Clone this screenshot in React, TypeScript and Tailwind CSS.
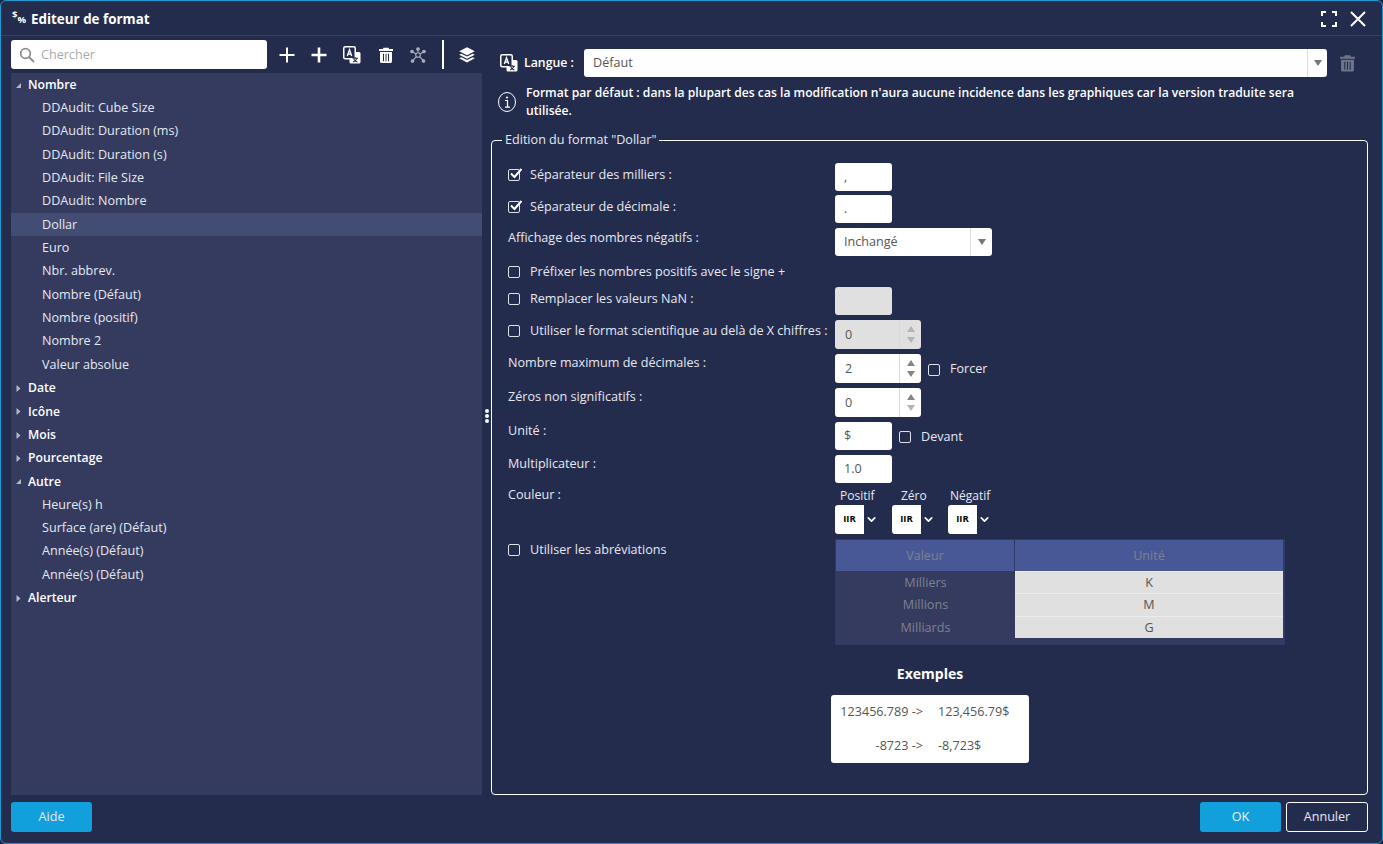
import React from "react";
import { ChevronDown } from "lucide-react";

const nombre = [
  "DDAudit: Cube Size",
  "DDAudit: Duration (ms)",
  "DDAudit: Duration (s)",
  "DDAudit: File Size",
  "DDAudit: Nombre",
  "Dollar",
  "Euro",
  "Nbr. abbrev.",
  "Nombre (Défaut)",
  "Nombre (positif)",
  "Nombre 2",
  "Valeur absolue",
];
const autre = ["Heure(s) h", "Surface (are) (Défaut)", "Année(s) (Défaut)", "Année(s) (Défaut)"];

const PlusIcon = ({ thick }: { thick?: boolean }) => (
  <svg width="16" height="16" viewBox="0 0 16 16" fill="none" stroke="#fff" strokeWidth={thick ? 2.6 : 2}>
    <path d="M8 .5v15M.5 8h15" />
  </svg>
);

const TrashIcon = ({ color = "#fff", w = 14, h = 16 }: { color?: string; w?: number; h?: number }) => (
  <svg width={w} height={h} viewBox="1 0 14 16" fill={color}>
    <path d="M5.500 .8h5l.6 1.300H15v1.900H1V2.100h3.900z" />
    <path fillRule="evenodd" d="M2 5h12v9.500c0 .9-.7 1.500-1.500 1.500h-9c-.8 0-1.500-.6-1.500-1.500zM5 6.800v7.500h1V6.800zm2.500 0v7.500h1V6.800zm2.500 0v7.500h1V6.800z" />
  </svg>
);

const TranslateIcon = ({ size = 18 }: { size?: number }) => (
  <svg width={size} height={size} viewBox="0 0 18 18" fill="none">
    <rect x="6.500" y="6" width="11" height="11.500" rx="1.500" fill="#fff" />
    <rect x=".75" y=".75" width="11.500" height="12" rx="1.500" fill="#242c4e" stroke="#fff" strokeWidth="1.500" />
    <path d="M4.300 10 6.500 3.800 8.700 10M5 8h3" stroke="#fff" strokeWidth="1.300" />
    <path d="M9.500 12.200h5.500M12 11v1.200M14 12.400c-.8 1.900-2.200 3-3.900 3.600M10.800 13.200c.8 1.300 2 2.300 3.600 2.800" stroke="#242c4e" strokeWidth="1.100" />
  </svg>
);

const NetworkIcon = () => (
  <svg width="16" height="16" viewBox="0 0 16 16" fill="none" stroke="#a9adbd" strokeWidth="1.100">
    <path d="M8 3v2.600M3 5l3 2M13 5l-3 2M3.200 13l3-3.200M12.800 13l-3-3.200" />
    <circle cx="8" cy="8" r="2.300" />
    <circle cx="8" cy="2" r="1.300" fill="#a9adbd" />
    <circle cx="2" cy="4.500" r="1.300" fill="#a9adbd" />
    <circle cx="14" cy="4.500" r="1.300" fill="#a9adbd" />
    <circle cx="2.500" cy="14" r="1.300" fill="#a9adbd" />
    <circle cx="13.500" cy="14" r="1.300" fill="#a9adbd" />
  </svg>
);

const LayersIcon = () => (
  <svg width="16" height="16" viewBox="0 0 16 16" fill="#fff">
    <path d="M8 .3 15.800 4.300 8 8.300.2 4.300z" />
    <path d="M2.300 6.700 8 9.600l5.700-2.900 2.100 1.100L8 11.800.2 7.800z" />
    <path d="M2.300 10.200 8 13.100l5.700-2.900 2.100 1.100L8 15.400.2 11.300z" />
  </svg>
);

const Arrow = ({ open }: { open?: boolean }) =>
  open ? (
    <svg width="5" height="5" viewBox="0 0 5 5" className="ml-[5px] mr-[7px]" fill="#b4b8c6">
      <path d="M5 0v5H0z" />
    </svg>
  ) : (
    <svg width="5" height="7" viewBox="0 0 5 7" className="ml-[5px] mr-[7px]" fill="#b4b8c6">
      <path d="M.5 0 4.500 3.500.5 7z" />
    </svg>
  );

const Group = ({ label, open }: { label: string; open?: boolean }) => (
  <div className="flex h-[23.33px] items-center pt-[1px] text-[12.200px] font-semibold text-white">
    <Arrow open={open} />
    {label}
  </div>
);

const Item = ({ label, active }: { label: string; active?: boolean }) => (
  <div className={`flex h-[23.33px] items-center pl-[31px] pt-[1px] text-[#e6e8f0] ${active ? "bg-[#434c73]" : ""}`}>{label}</div>
);

const Check = ({ checked }: { checked?: boolean }) => (
  <span className="relative mr-[10px] block h-[12px] w-[12px] shrink-0 rounded-[2px] border-[1.500px] border-[#dfe1e8]">
    {checked && (
      <svg width="14" height="12" viewBox="0 0 14 12" className="absolute left-[0px] top-[-2px]" fill="none" stroke="#fff" strokeWidth="2">
        <path d="M2 5.500 5.500 9l7-8" />
      </svg>
    )}
  </span>
);

const Field = ({ value, disabled }: { value?: string; disabled?: boolean }) => (
  <div className={`flex h-[28px] w-[57px] items-center rounded-[3px] px-[9px] text-[#555] ${disabled ? "bg-[#e0e0e0]" : "bg-white"}`}>
    {value}
  </div>
);

const Spinner = ({ value, disabled, faintDown }: { value: string; disabled?: boolean; faintDown?: boolean }) => (
  <div className={`flex h-[29px] w-[86px] items-center rounded-[3px] pl-[10px] text-[#555] ${disabled ? "bg-[#e0e0e0]" : "bg-white"}`}>
    <span className="flex-1 pt-[1px]">{value}</span>
    <div className="flex h-full w-[22px] flex-col items-center justify-center gap-[5px] border-l border-[#d9d9d9]">
      <svg width="8" height="6" viewBox="0 0 8 6" fill={disabled ? "#b4b4b4" : "#858585"}>
        <path d="M4 0l4 6H0z" />
      </svg>
      <svg width="8" height="6" viewBox="0 0 8 6" fill={disabled || faintDown ? "#b4b4b4" : "#858585"}>
        <path d="M4 6l4-6H0z" />
      </svg>
    </div>
  </div>
);

const Caret = () => (
  <svg width="8" height="6" viewBox="0 0 8 6" fill="#777">
    <path d="M4 6l4-6H0z" />
  </svg>
);

const Swatch = () => (
  <div className="flex items-center">
    <div className="flex h-[29px] w-[29px] items-center justify-center rounded-l-[3px] bg-white text-[9.500px] font-bold text-black">IIR</div>
    <ChevronDown size={13} strokeWidth={3.200} className="ml-[1px] text-white" />
  </div>
);

// label column is fixed so that every control starts at the same x
const Row = ({ label, check, checked, top, children, className }: { label: string; check?: boolean; checked?: boolean; top?: string; children?: React.ReactNode; className?: string }) => (
  <div className={`flex items-start ${className ?? ""}`}>
    <div className={`flex w-[327px] shrink-0 items-center whitespace-nowrap text-[#e6e8f0] ${top ?? "pt-[2px]"}`}>
      {check && <Check checked={checked} />}
      {label}
    </div>
    {children}
  </div>
);

const AbbrevRow = ({ name, unit, className }: { name: string; unit: string; className: string }) => (
  <div className={`flex items-center text-center ${className}`}>
    <span className="w-[179px] pt-[2px]">{name}</span>
    <span className="mr-[1px] flex h-full flex-1 items-center justify-center border-t border-[#ebebeb] bg-[#e0e0e0] pt-[1px] text-[#555]">{unit}</span>
  </div>
);

export default function App() {
  return (
    <div className="h-screen w-full overflow-hidden bg-[#1a2140] font-['Open_Sans',sans-serif] text-[12.600px] text-white">
      <div className="flex h-full flex-col rounded-[6px] border border-[#1b9ad2] bg-[#242c4e]">
        {/* Title */}
        <div className="flex h-[35px] shrink-0 items-center border-b border-[#353e66] pl-[11px] pr-[16px] pt-[2px]">
          <span className="mr-[3px] flex h-[20px] w-[16px] items-start text-[9.500px] font-bold leading-none">
            <span className="mt-[1px]">$</span>
            <span className="mt-[6px] text-[9.500px] tracking-[-0.5px]">%</span>
          </span>
          <span className="flex-1 text-[13.400px] font-bold">Editeur de format</span>
          <svg width="16" height="16" viewBox="0 0 16 16" fill="none" stroke="#fff" strokeWidth="2" className="mr-[13px]">
            <path d="M1 5V1h4M11 1h4v4M15 11v4h-4M5 15H1v-4" />
          </svg>
          <svg width="16" height="16" viewBox="0 0 16 16" fill="none" stroke="#fff" strokeWidth="2">
            <path d="M1 1l14 14M15 1 1 15" />
          </svg>
        </div>

        <div className="flex min-h-0 flex-1">
          {/* Left panel */}
          <div className="ml-[10px] flex w-[471px] shrink-0 flex-col pt-[4px]">
            <div className="flex h-[29px] shrink-0 items-center">
              <div className="flex h-full w-[256px] items-center rounded-[3px] bg-white pl-[8px] pt-[1px] text-[#aaa]">
                <svg width="16" height="16" viewBox="0 0 16 16" fill="none" stroke="#8d8d8d" strokeWidth="1.800" className="mr-[6px]">
                  <circle cx="6.500" cy="6.500" r="4.800" />
                  <path d="M10 10l5 5" />
                </svg>
                Chercher
              </div>
              <div className="ml-[12px] flex items-center">
                <PlusIcon />
                <span className="ml-[16px]"><PlusIcon thick /></span>
                <span className="ml-[16px]"><TranslateIcon /></span>
                <span className="ml-[18px]"><TrashIcon /></span>
                <span className="ml-[17px]"><NetworkIcon /></span>
                <span className="ml-[16px] h-[29px] w-[2px] bg-white" />
                <span className="ml-[15px]"><LayersIcon /></span>
              </div>
            </div>
            <div className="mt-[4px] min-h-0 flex-1 bg-[#343b5f]">
              <Group label="Nombre" open />
              {nombre.map((n) => (
                <Item key={n} label={n} active={n === "Dollar"} />
              ))}
              <Group label="Date" />
              <Group label="Icône" />
              <Group label="Mois" />
              <Group label="Pourcentage" />
              <Group label="Autre" open />
              {autre.map((n, i) => (
                <Item key={i} label={n} />
              ))}
              <Group label="Alerteur" />
            </div>
          </div>

          {/* Splitter */}
          <div className="flex w-[9px] shrink-0 flex-col items-center justify-center gap-[1px] pl-[1px]">
            <span className="h-[4px] w-[4px] rounded-full bg-white" />
            <span className="h-[4px] w-[4px] rounded-full bg-white" />
            <span className="h-[4px] w-[4px] rounded-full bg-white" />
          </div>

          {/* Right panel */}
          <div className="mr-[14px] flex min-w-0 flex-1 flex-col">
            <div className="ml-[9px] mt-[13px] flex h-[28px] shrink-0 items-center">
              <TranslateIcon />
              <span className="ml-[6px] w-[60px] text-[12.300px] font-semibold">Langue :</span>
              <div className="flex h-full w-[743px] items-center rounded-[3px] bg-white pl-[9px] text-[#555]">
                <span className="flex-1">Défaut</span>
                <div className="flex h-full w-[20px] items-center justify-center border-l border-[#ddd]">
                  <Caret />
                </div>
              </div>
              <span className="ml-[13px]"><TrashIcon color="#6f7589" w={15} h={18} /></span>
            </div>
            <div className="ml-[6px] mt-[3px] flex h-[43px] shrink-0 items-center">
              <svg width="20" height="22" viewBox="0 0 20 22" fill="none" stroke="#fff" strokeWidth="1" className="shrink-0">
                <ellipse cx="10" cy="11" rx="8.500" ry="9.500" />
                <circle cx="10" cy="6.500" r="1.100" fill="#fff" stroke="none" />
                <path d="M8 9.500h2.500V16M8 16.200h5" strokeWidth="1.200" />
              </svg>
              <p className="ml-[9px] w-[790px] text-[12.150px] font-semibold leading-[18px]">
                Format par défaut : dans la plupart des cas la modification n'aura aucune incidence dans les graphiques car la version traduite sera utilisée.
              </p>
            </div>

            <fieldset className="mt-[8px] flex min-h-0 min-w-0 flex-1 flex-col rounded-[4px] border border-white pl-[16px]">
              <legend className="ml-[-6px] px-[3px] leading-[18px] text-[#e6e8f0]">Edition du format "Dollar"</legend>

              <Row label="Séparateur des milliers :" check checked top="pt-[3px]" className="mt-[14px]">
                <Field value="," />
              </Row>
              <Row label="Séparateur de décimale :" check checked top="pt-[3px]" className="mt-[4px]">
                <Field value="." />
              </Row>
              <Row label="Affichage des nombres négatifs :" top="pt-[1px]" className="mt-[5px]">
                <div className="flex h-[28px] w-[157px] items-center rounded-[3px] bg-white pl-[9px] text-[#555]">
                  <span className="flex-1">Inchangé</span>
                  <div className="flex h-full w-[22px] items-center justify-center border-l border-[#ddd]">
                    <Caret />
                  </div>
                </div>
              </Row>
              <Row label="Préfixer les nombres positifs avec le signe +" check top="pt-[1px]" className="mt-[6px] h-[25px]" />
              <Row label="Remplacer les valeurs NaN :" check top="pt-[3px]">
                <Field disabled />
              </Row>
              <Row label="Utiliser le format scientifique au delà de X chiffres :" check top="pt-[2px]" className="mt-[5px]">
                <Spinner value="0" disabled />
              </Row>
              <Row label="Nombre maximum de décimales :" className="mt-[5px]" top="pt-0">
                <Spinner value="2" />
                <div className="ml-[7px] flex h-[29px] items-center pt-[2px] text-[#e6e8f0]">
                  <Check />
                  Forcer
                </div>
              </Row>
              <Row label="Zéros non significatifs :" className="mt-[5px]" top="pt-0">
                <Spinner value="0" faintDown />
              </Row>
              <Row label="Unité :" className="mt-[5px]" top="pt-0">
                <Field value="$" />
                <div className="ml-[7px] flex h-[28px] items-center pt-[2px] text-[#e6e8f0]">
                  <Check />
                  Devant
                </div>
              </Row>
              <Row label="Multiplicateur :" className="mt-[5px]" top="pt-0">
                <Field value="1.0" />
              </Row>
              <Row label="Couleur :" className="mt-[5px]" top="-mt-[2px]">
                <div className="flex">
                  <div className="flex w-[57px] flex-col">
                    <span className="h-[17px] pl-[5px] text-[12px] leading-[15px] text-[#e6e8f0]">Positif</span>
                    <Swatch />
                  </div>
                  <div className="flex w-[56px] flex-col">
                    <span className="h-[17px] pl-[9px] text-[12px] leading-[15px] text-[#e6e8f0]">Zéro</span>
                    <Swatch />
                  </div>
                  <div className="flex flex-col">
                    <span className="h-[17px] pl-[2px] text-[12px] leading-[15px] text-[#e6e8f0]">Négatif</span>
                    <Swatch />
                  </div>
                </div>
              </Row>
              <Row label="Utiliser les abréviations" check top="pt-[2px]" className="mt-[5px]">
                <div className="w-[450px] border border-[#2f3a6b] bg-[#343b5f] pb-[6px] text-[#7d8192]">
                  <div className="flex h-[31px] items-center bg-[#485796] text-center">
                    <span className="w-[179px] border-r border-[#2f3a6b] leading-[31px]">Valeur</span>
                    <span className="flex-1 border-r border-[#2f3a6b] leading-[31px]">Unité</span>
                  </div>
                  <AbbrevRow name="Milliers" unit="K" className="h-[22px]" />
                  <AbbrevRow name="Millions" unit="M" className="h-[23px]" />
                  <AbbrevRow name="Milliards" unit="G" className="h-[22px]" />
                </div>
              </Row>

              <div className="ml-[323px] w-[198px]">
                <div className="mt-[18px] h-[32px] text-center text-[14px] font-bold">Exemples</div>
                <div className="grid h-[68px] grid-cols-[91px_1fr] grid-rows-2 items-center gap-x-[15px] rounded-[3px] bg-white pl-[1px] text-[#555]">
                  <span className="text-right">123456.789 -&gt;</span>
                  <span>123,456.79$</span>
                  <span className="text-right">-8723 -&gt;</span>
                  <span>-8,723$</span>
                </div>
              </div>
            </fieldset>
          </div>
        </div>

        {/* Footer */}
        <div className="flex h-[48px] shrink-0 items-start pl-[10px] pr-[14px] pt-[7px]">
          <button className="h-[30px] w-[81px] rounded-[3px] bg-[#11a0dc] text-[12.600px] text-[#e6e8f0]">Aide</button>
          <div className="flex-1" />
          <button className="h-[30px] w-[81px] rounded-[3px] bg-[#11a0dc] text-[12.600px] text-[#f0f2f6]">OK</button>
          <button className="ml-[5px] h-[30px] w-[82px] rounded-[3px] border border-white text-[12.600px] text-[#e6e8f0]">Annuler</button>
        </div>
      </div>
    </div>
  );
}
